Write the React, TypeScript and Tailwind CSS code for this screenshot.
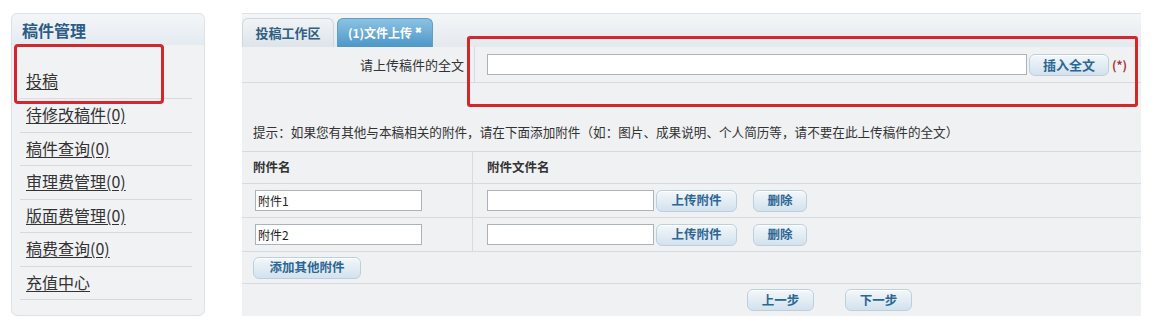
import React from "react";

const font = { fontFamily: '"Noto Sans CJK SC", "Noto Sans", sans-serif' };

const btn =
  "flex items-center justify-center rounded-[6px] border border-[#bccfdd] bg-gradient-to-b from-[#f3f7fa] to-[#d3e2ed] text-[12.5px] font-bold text-[#2b6795] shadow-[inset_0_1px_0_#fff]";

const menu = ["待修改稿件(0)", "稿件查询(0)", "审理费管理(0)", "版面费管理(0)", "稿费查询(0)", "充值中心"];

function Sidebar() {
  return (
    <aside className="relative mt-[13px] ml-[11px] h-[303px] w-[194px] rounded-[6px] border border-[#dde2e6] bg-[#f1f2f4]">
      <div className="flex h-[31px] items-center rounded-t-[6px] bg-gradient-to-b from-[#f4f6f8] to-[#e3ebf1] pl-[10px] text-[16px] font-bold text-[#2d5b85]">
        稿件管理
      </div>
      <div className="mr-[12px] ml-[8px]">
        <div className="flex h-[54px] items-end border-b border-[#d6dade] pb-[10px] pl-[6px]">
          <a className="text-[16px] leading-none text-[#333] underline underline-offset-2">投稿</a>
        </div>
        {menu.map((m) => (
          <div key={m} className="flex h-[33.5px] items-center border-b border-[#d6dade] pl-[6px]">
            <a className="-mt-[2px] text-[16px] leading-none text-[#333] underline underline-offset-2">{m}</a>
          </div>
        ))}
      </div>
      <div className="pointer-events-none absolute top-[30px] left-[2px] h-[60px] w-[150px] rounded-[4px] border-[3px] border-[#d4262c]" />
    </aside>
  );
}

function Field({ value, w }: { value?: string; w: number }) {
  return (
    <div
      className="flex h-[21px] items-center border border-[#aab3bb] bg-white pl-[2px] text-[12px] text-[#222]"
      style={{ width: w }}
    >
      {value}
    </div>
  );
}

function AttachRow({ name }: { name: string }) {
  return (
    <div className="flex h-[34px] border-b border-[#d6dbe0]">
      <div className="flex w-[231px] items-center border-r border-[#d6dbe0] pl-[13px]">
        <Field value={name} w={167} />
      </div>
      <div className="flex items-center pl-[14px]">
        <Field w={167} />
        <div className={`${btn} ml-[2px] h-[22px] w-[81px]`}>上传附件</div>
        <div className={`${btn} ml-[16px] h-[22px] w-[54px]`}>删除</div>
      </div>
    </div>
  );
}

function Main() {
  return (
    <main className="relative mt-[13px] ml-[37px] h-[303px] w-[899px] border-t border-[#dde2e6] bg-[#eff1f3]">
      <div className="flex h-[33px] items-end gap-[3px] bg-gradient-to-b from-[#f4f6f7] to-[#e4e9ed]">
        <div className="flex h-[29px] w-[92px] items-center justify-center rounded-t-[6px] border border-b-0 border-[#cfd7de] bg-gradient-to-b from-[#f1f4f6] to-[#dde4ea] text-[13px] font-bold text-[#2f5f86]">
          投稿工作区
        </div>
        <div className="flex h-[29px] w-[96px] items-center justify-center gap-[3px] rounded-t-[6px] border border-b-0 border-[#5d9ecb] bg-gradient-to-b from-[#8cc2e2] to-[#4b97c8] text-[12px] font-bold text-white">
          (1)文件上传<span className="-mt-[6px] text-[8px]">✖</span>
        </div>
      </div>

      <div className="flex h-[36px] border-b border-[#d6dbe0]">
        <div className="flex w-[233px] items-center justify-end border-r border-[#d6dbe0] pr-[10px] text-[13px] text-[#333]">
          请上传稿件的全文
        </div>
        <div className="flex items-center pl-[12px]">
          <Field w={540} />
          <div className={`${btn} ml-[2px] h-[22px] w-[80px] text-[13px]`}>插入全文</div>
          <span className="ml-[3px] text-[12px] font-bold text-[#a83530]">(*)</span>
        </div>
      </div>

      <div className="flex h-[69px] items-end border-b border-[#d6dbe0] pb-[9px] pl-[11px] text-[12.6px] text-[#333]">
        提示：如果您有其他与本稿相关的附件，请在下面添加附件（如：图片、成果说明、个人简历等，请不要在此上传稿件的全文）
      </div>

      <div className="flex h-[32px] border-b border-[#d6dbe0] text-[12.5px] font-bold text-[#333]">
        <div className="flex w-[231px] items-center border-r border-[#d6dbe0] pl-[11px]">附件名</div>
        <div className="flex items-center pl-[14px]">附件文件名</div>
      </div>

      <AttachRow name="附件1" />
      <AttachRow name="附件2" />

      <div className="flex h-[32px] items-center border-b border-[#d6dbe0] pl-[11px]">
        <div className={`${btn} h-[22px] w-[108px]`}>添加其他附件</div>
      </div>

      <div className="flex h-[32px] items-center gap-[31px] pl-[505px]">
        <div className={`${btn} h-[22px] w-[67px]`}>上一步</div>
        <div className={`${btn} h-[22px] w-[67px]`}>下一步</div>
      </div>

      <div className="pointer-events-none absolute top-[22px] left-[225px] h-[71px] w-[671px] rounded-[3px] border-[3px] border-[#d4262c]" />
    </main>
  );
}

export default function App() {
  return (
    <div className="flex h-[329px] w-[1155px] bg-white" style={font}>
      <Sidebar />
      <Main />
    </div>
  );
}
